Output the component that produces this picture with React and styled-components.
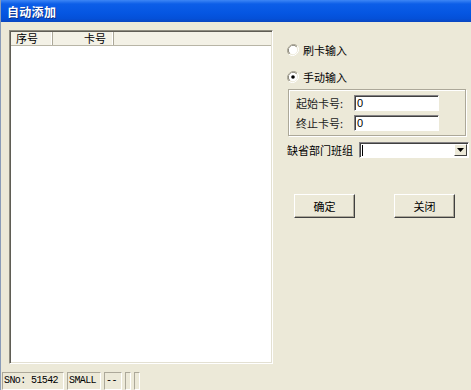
import styled, { createGlobalStyle } from "styled-components";

const GlobalStyle = createGlobalStyle`
  html, body {
    margin: 0;
    padding: 0;
    background: #ece9d8;
  }
  body {
    font-family: "Noto Sans CJK SC", "Liberation Sans", sans-serif;
    font-size: 11px;
    color: #000;
  }
`;

const Window = styled.div`
  width: 471px;
  height: 390px;
  display: flex;
  flex-direction: column;
  background: #ece9d8;
  overflow: hidden;
  box-sizing: border-box;
  border-left: 1px solid #8a9cb8;
`;

const TitleBar = styled.div`
  height: 22px;
  flex-shrink: 0;
  display: flex;
  align-items: center;
  padding-left: 6px;
  background: linear-gradient(
    180deg,
    #3d86f5 0%,
    #0c5ee8 18%,
    #0556e2 60%,
    #0450d8 85%,
    #0a46c0 100%
  );
  color: #fff;
  font-weight: bold;
  font-size: 12px;
  letter-spacing: 0.3px;
  text-shadow: 1px 1px 0 #0a2f8a;
`;

const Body = styled.div`
  flex: 1;
  display: flex;
  padding: 8px 0 0 8px;
  min-height: 0;
`;

const ListView = styled.div`
  width: 264px;
  height: 334px;
  flex-shrink: 0;
  box-sizing: border-box;
  background: #fff;
  border: 1px solid;
  border-color: #8e8c80 #fff #fff #8e8c80;
  box-shadow: inset 1px 1px 0 #5f5d55, inset -1px -1px 0 #e3e0d2;
  padding: 1px;
  display: flex;
  flex-direction: column;
`;

const HeaderRow = styled.div`
  display: flex;
  height: 13px;
  background: #f3f1e6;
  border-bottom: 1px solid #b8b5a6;
`;

const HeaderCell = styled.div`
  width: ${(p) => p.$w}px;
  box-sizing: border-box;
  padding: 0 ${(p) => (p.$right ? 7 : 0)}px 0 ${(p) => (p.$right ? 0 : 5)}px;
  text-align: ${(p) => (p.$right ? "right" : "left")};
  line-height: 13px;
  border-right: 1px solid #aca899;
  box-shadow: inset -1px 0 0 #fff;
`;

const RightPanel = styled.div`
  flex: 1;
  display: flex;
  flex-direction: column;
  padding-left: 14px;
`;

const RadioRow = styled.label`
  display: flex;
  align-items: center;
  gap: 4px;
  height: 14px;
  margin-top: ${(p) => p.$mt}px;
`;

const GroupBox = styled.div`
  width: 178px;
  height: 47px;
  box-sizing: border-box;
  margin-top: 5px;
  margin-left: 1px;
  border: 1px solid #aca899;
  box-shadow: inset 1px 1px 0 #fff, 1px 1px 0 #fff;
  padding: 5px 0 0 7px;
  display: flex;
  flex-direction: column;
  gap: 4px;
`;

const FieldRow = styled.div`
  display: flex;
  align-items: center;
  height: 16px;
`;

const FieldLabel = styled.span`
  width: 58px;
  color: #222;
`;

const TextBox = styled.div`
  width: ${(p) => p.$w}px;
  height: 16px;
  box-sizing: border-box;
  background: #fff;
  border: 1px solid;
  border-color: #848284 #fff #fff #848284;
  box-shadow: inset 1px 1px 0 #404040;
  padding-left: 2px;
  font-family: "Liberation Sans", sans-serif;
  font-size: 11px;
  line-height: 14px;
  display: flex;
  align-items: center;
`;

const ComboRow = styled.div`
  display: flex;
  align-items: center;
  margin-top: 6px;
  height: 16px;
`;

const ComboLabel = styled.span`
  width: 72px;
`;

const Combo = styled(TextBox)`
  justify-content: space-between;
  padding-right: 1px;
`;

const Caret = styled.span`
  width: 1px;
  height: 11px;
  background: #000;
`;

const DropButton = styled.div`
  width: 13px;
  height: 12px;
  box-sizing: border-box;
  background: #ece9d8;
  border: 1px solid;
  border-color: #fff #404040 #404040 #fff;
  display: flex;
  align-items: center;
  justify-content: center;
`;

const ButtonRow = styled.div`
  display: flex;
  gap: 39px;
  margin-top: 36px;
  padding-left: 7px;
`;

const Button = styled.button`
  width: 61px;
  height: 24px;
  box-sizing: border-box;
  background: #ece9d8;
  font-family: inherit;
  font-size: 11px;
  color: #000;
  border: 1px solid;
  border-color: #fff #404040 #404040 #fff;
  box-shadow: inset -1px -1px 0 #aca899;
  padding: 0;
`;

const StatusBar = styled.div`
  height: 20px;
  flex-shrink: 0;
  display: flex;
  gap: 3px;
  margin-top: 6px;
  padding: 2px 0 0 1px;
  box-sizing: border-box;
  font-family: "Liberation Mono", monospace;
  font-size: 10px;
`;

const StatusPanel = styled.div`
  width: ${(p) => p.$w}px;
  box-sizing: border-box;
  border: 1px solid;
  border-color: #aca899 #fff #fff #aca899;
  padding-left: 1px;
  line-height: 16px;
  white-space: nowrap;
  overflow: hidden;
  letter-spacing: -0.6px;
`;

const RadioIcon = ({ checked }) => (
  <svg width="12" height="12" viewBox="0 0 12 12">
    <path d="M10.2 1.8 A6 6 0 0 0 1.8 10.2" fill="none" stroke="#aca899" strokeWidth="1" />
    <path d="M1.8 10.2 A6 6 0 0 0 10.2 1.8" fill="none" stroke="#fff" strokeWidth="1" />
    <path d="M9.5 2.5 A5 5 0 0 0 2.5 9.5" fill="none" stroke="#716f64" strokeWidth="1" />
    <circle cx="6" cy="6" r="4.2" fill="#fff" />
    {checked && <circle cx="6" cy="6" r="1.8" fill="#000" />}
  </svg>
);

export default function App() {
  return (
    <>
      <GlobalStyle />
      <Window>
        <TitleBar>自动添加</TitleBar>
        <Body>
          <ListView>
            <HeaderRow>
              <HeaderCell $w={42}>序号</HeaderCell>
              <HeaderCell $w={61} $right>
                卡号
              </HeaderCell>
            </HeaderRow>
          </ListView>
          <RightPanel>
            <RadioRow $mt={13}>
              <RadioIcon />
              <span>刷卡输入</span>
            </RadioRow>
            <RadioRow $mt={13}>
              <RadioIcon checked />
              <span>手动输入</span>
            </RadioRow>
            <GroupBox>
              <FieldRow>
                <FieldLabel>起始卡号:</FieldLabel>
                <TextBox $w={85}>0</TextBox>
              </FieldRow>
              <FieldRow>
                <FieldLabel>终止卡号:</FieldLabel>
                <TextBox $w={85}>0</TextBox>
              </FieldRow>
            </GroupBox>
            <ComboRow>
              <ComboLabel>缺省部门班组</ComboLabel>
              <Combo $w={110}>
                <Caret />
                <DropButton>
                  <svg width="7" height="4" viewBox="0 0 7 4">
                    <path d="M0 0h7L3.5 4z" fill="#000" />
                  </svg>
                </DropButton>
              </Combo>
            </ComboRow>
            <ButtonRow>
              <Button>确定</Button>
              <Button>关闭</Button>
            </ButtonRow>
          </RightPanel>
        </Body>
        <StatusBar>
          <StatusPanel $w={62}>SNo: 51542</StatusPanel>
          <StatusPanel $w={34}>SMALL</StatusPanel>
          <StatusPanel $w={18}>--</StatusPanel>
          <StatusPanel $w={6} />
          <StatusPanel $w={6} />
        </StatusBar>
      </Window>
    </>
  );
}
